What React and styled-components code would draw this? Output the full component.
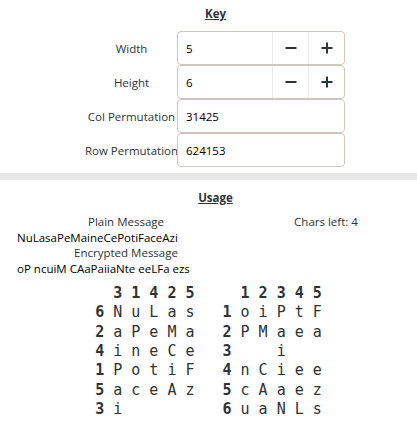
import React from "react";
import styled, { createGlobalStyle } from "styled-components";

const Global = createGlobalStyle`
  html, body { margin: 0; padding: 0; background: #ffffff; }
  body { font-family: "Open Sans", "Noto Sans", sans-serif; font-size: 11.5px; color: #2e3436; }
`;

const Page = styled.div`
  width: 417px;
  height: 433px;
  overflow: hidden;
  background: #fff;
`;

const Section = styled.section`
  display: flex;
  flex-direction: column;
  padding-top: ${(p) => p.$top}px;
`;

const Heading = styled.h2`
  margin: 0;
  padding-left: 14px;
  font-size: 11.5px;
  font-weight: 700;
  line-height: 16px;
  text-align: center;
  text-decoration: underline;
  color: #2e3436;
`;

const KeyGrid = styled.div`
  display: grid;
  grid-template-columns: 91px 168px;
  grid-auto-rows: 34px;
  justify-content: center;
  padding-left: 14px;
  margin-top: 9px;
`;

const Label = styled.div`
  display: flex;
  align-items: center;
  justify-content: center;
  white-space: nowrap;
  color: #2e3436;
`;

const Field = styled.div`
  display: flex;
  align-items: stretch;
  border: 1px solid #cdc7c2;
  border-radius: 4px;
  background: #fff;
  box-sizing: border-box;
  height: 34px;
`;

const Value = styled.div`
  flex: 1;
  display: flex;
  align-items: center;
  padding-left: 8px;
  color: #000;
`;

const SpinButton = styled.div`
  width: 35px;
  display: flex;
  align-items: center;
  justify-content: center;
  border-left: 1px solid #ececec;
`;

const Band = styled.div`
  height: 7px;
  background: #e8e8e8;
  margin-top: 6px;
`;

const UsageGrid = styled.div`
  display: grid;
  grid-template-columns: 218px 1fr;
  padding-left: 17px;
  margin-top: 8px;
  line-height: 15.7px;
`;

const Caption = styled.div`
  text-align: center;
  color: #2e3436;
`;

const Message = styled.div`
  grid-column: 1 / span 2;
  color: #000;
  white-space: pre;
`;

const Tables = styled.div`
  display: flex;
  justify-content: center;
  gap: 28px;
  margin-top: 7px;
`;

const Table = styled.pre`
  margin: 0;
  font-family: "DejaVu Sans Mono", monospace;
  font-size: 15px;
  line-height: 19.4px;
  color: #2e3436;
`;

const B = styled.b`
  font-weight: 700;
`;

const Minus = () => (
  <svg width="12" height="12" viewBox="0 0 12 12">
    <rect x="0.5" y="5" width="11" height="2" fill="#2e3436" />
  </svg>
);
const Plus = () => (
  <svg width="12" height="12" viewBox="0 0 12 12">
    <rect x="0.5" y="5" width="11" height="2" fill="#2e3436" />
    <rect x="5" y="0.5" width="2" height="11" fill="#2e3436" />
  </svg>
);

const Spin = ({ value }) => (
  <Field>
    <Value>{value}</Value>
    <SpinButton><Minus /></SpinButton>
    <SpinButton><Plus /></SpinButton>
  </Field>
);

const Entry = ({ value }) => (
  <Field>
    <Value>{value}</Value>
  </Field>
);

const MonoTable = ({ header, rows }) => (
  <Table>
    {"  "}
    <B>{header.join(" ")}</B>
    {"\n"}
    {rows.map(([label, cells], i) => (
      <React.Fragment key={i}>
        <B>{label}</B>
        {" " + cells.join(" ")}
        {i < rows.length - 1 ? "\n" : ""}
      </React.Fragment>
    ))}
  </Table>
);

export default function App() {
  const left = [
    ["6", ["N", "u", "L", "a", "s"]],
    ["2", ["a", "P", "e", "M", "a"]],
    ["4", ["i", "n", "e", "C", "e"]],
    ["1", ["P", "o", "t", "i", "F"]],
    ["5", ["a", "c", "e", "A", "z"]],
    ["3", ["i"]],
  ];
  const right = [
    ["1", ["o", "i", "P", "t", "F"]],
    ["2", ["P", "M", "a", "e", "a"]],
    ["3", [" ", " ", "i"]],
    ["4", ["n", "C", "i", "e", "e"]],
    ["5", ["c", "A", "a", "e", "z"]],
    ["6", ["u", "a", "N", "L", "s"]],
  ];
  return (
    <Page>
      <Global />
      <Section $top={6}>
        <Heading>Key</Heading>
        <KeyGrid>
          <Label>Width</Label>
          <Spin value="5" />
          <Label>Height</Label>
          <Spin value="6" />
          <Label>Col Permutation</Label>
          <Entry value="31425" />
          <Label>Row Permutation</Label>
          <Entry value="624153" />
        </KeyGrid>
      </Section>
      <Band />
      <Section $top={10}>
        <Heading>Usage</Heading>
        <UsageGrid>
          <Caption>Plain Message</Caption>
          <Caption>Chars left: 4</Caption>
          <Message>NuLasaPeMaineCePotiFaceAzi</Message>
          <Caption>Encrypted Message</Caption>
          <div />
          <Message>oP ncuiM CAaPaiiaNte eeLFa ezs</Message>
        </UsageGrid>
        <Tables>
          <MonoTable header={["3", "1", "4", "2", "5"]} rows={left} />
          <MonoTable header={["1", "2", "3", "4", "5"]} rows={right} />
        </Tables>
      </Section>
    </Page>
  );
}
